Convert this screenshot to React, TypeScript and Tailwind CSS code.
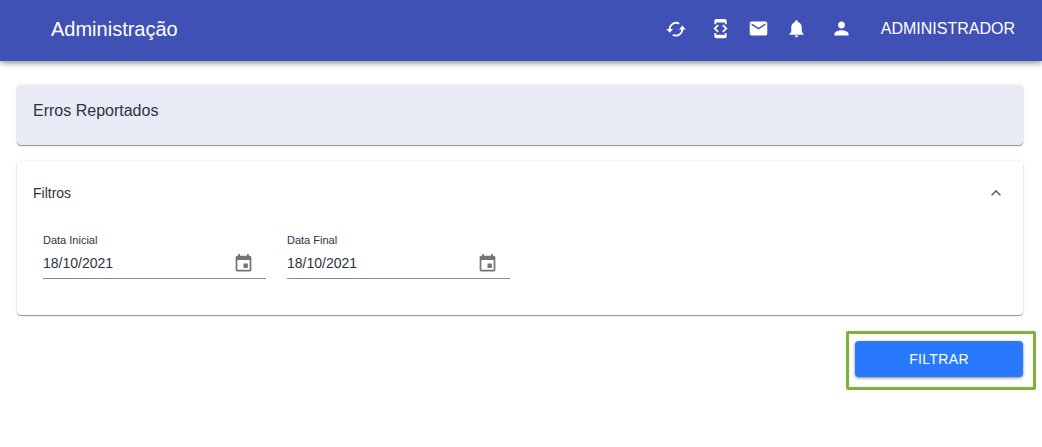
import React, { useState } from "react";
import {
  MdDeveloperMode,
  MdEmail,
  MdEvent,
  MdExpandLess,
  MdNotifications,
  MdPerson,
} from "react-icons/md";

function SyncIcon() {
  return (
    <svg viewBox="0 0 20 20" className="size-5" fill="none" stroke="currentColor" strokeWidth="1.9" aria-hidden="true">
      <path d="M3.8 11A6.3 6.3 0 0 1 13.2 4.7" />
      <path d="M16.2 9.4A6.3 6.3 0 0 1 6.8 15.7" />
      <path d="M.4 10h6.6l-3.3 3.8z" fill="currentColor" stroke="none" />
      <path d="M13 10.4h6.6l-3.3-3.8z" fill="currentColor" stroke="none" />
    </svg>
  );
}

function DateField({ id, label }: { id: string; label: string }) {
  const [value, setValue] = useState("18/10/2021");
  return (
    <div className="w-[223px] border-b border-[#8c8c8c] pb-[3px]">
      <label htmlFor={id} className="block text-[11px] leading-3">
        {label}
      </label>
      <div className="mt-[5px] flex h-6 items-center pr-3">
        <input
          id={id}
          value={value}
          onChange={(e) => setValue(e.target.value)}
          className="min-w-0 flex-1 bg-transparent text-sm outline-none"
        />
        <button type="button" aria-label="Abrir calendário" className="text-[#757575]">
          <MdEvent className="size-[21px]" />
        </button>
      </div>
    </div>
  );
}

export default function App() {
  const [open, setOpen] = useState(true);
  return (
    <div className="font-['Liberation_Sans',Arial,sans-serif] text-[#2c333c]">
      <header className="flex h-[61px] items-center bg-[#3f51b5] pr-[27px] pb-1 pl-[51px] text-white shadow-[0_2px_6px_rgba(0,0,0,0.45)]">
        <h1 className="flex-1 text-xl">Administração</h1>
        <nav className="flex items-center">
          <button type="button" aria-label="Atualizar">
            <SyncIcon />
          </button>
          <button type="button" aria-label="Desenvolvedor" className="ml-6">
            <MdDeveloperMode className="size-[21px]" />
          </button>
          <button type="button" aria-label="Mensagens" className="ml-[17px]">
            <MdEmail className="size-[21px]" />
          </button>
          <button type="button" aria-label="Notificações" className="ml-[17px]">
            <MdNotifications className="size-[21px]" />
          </button>
          <button type="button" className="ml-6 flex items-center gap-[29px]">
            <MdPerson className="size-[21px]" />
            <span>ADMINISTRADOR</span>
          </button>
        </nav>
      </header>
      <main className="pt-6 pr-[19px] pl-[17px]">
        <section className="h-[60px] rounded bg-[#e8eaf6] px-4 pt-[14px] shadow-[0_1px_1px_rgba(0,0,0,0.4),0_0_3px_rgba(0,0,0,0.12)]">
          <h2>Erros Reportados</h2>
        </section>
        <section className="mt-4 rounded bg-white shadow-[0_1px_1px_rgba(0,0,0,0.4),0_0_3px_rgba(0,0,0,0.12)]">
          <button
            type="button"
            aria-expanded={open}
            onClick={() => setOpen(!open)}
            className="flex h-16 w-full items-center justify-between pr-[17px] pl-4 text-sm"
          >
            <span>Filtros</span>
            <MdExpandLess className="size-5 text-[#666666]" />
          </button>
          {open && (
            <div className="flex gap-[21px] px-[26px] pt-[9px] pb-9">
              <DateField id="start" label="Data Inicial" />
              <DateField id="end" label="Data Final" />
            </div>
          )}
        </section>
      </main>
      <div className="mt-4 flex justify-end pr-[6px]">
        <div className="rounded-xs border-3 border-[#7cb334] pt-[7px] pr-[10px] pb-[10px] pl-[6px]">
          <button
            type="button"
            className="block h-9 w-[168px] rounded bg-[#2979ff] text-sm tracking-wide text-white shadow-[0_1px_3px_rgba(0,0,0,0.5)]"
          >
            FILTRAR
          </button>
        </div>
      </div>
    </div>
  );
}
